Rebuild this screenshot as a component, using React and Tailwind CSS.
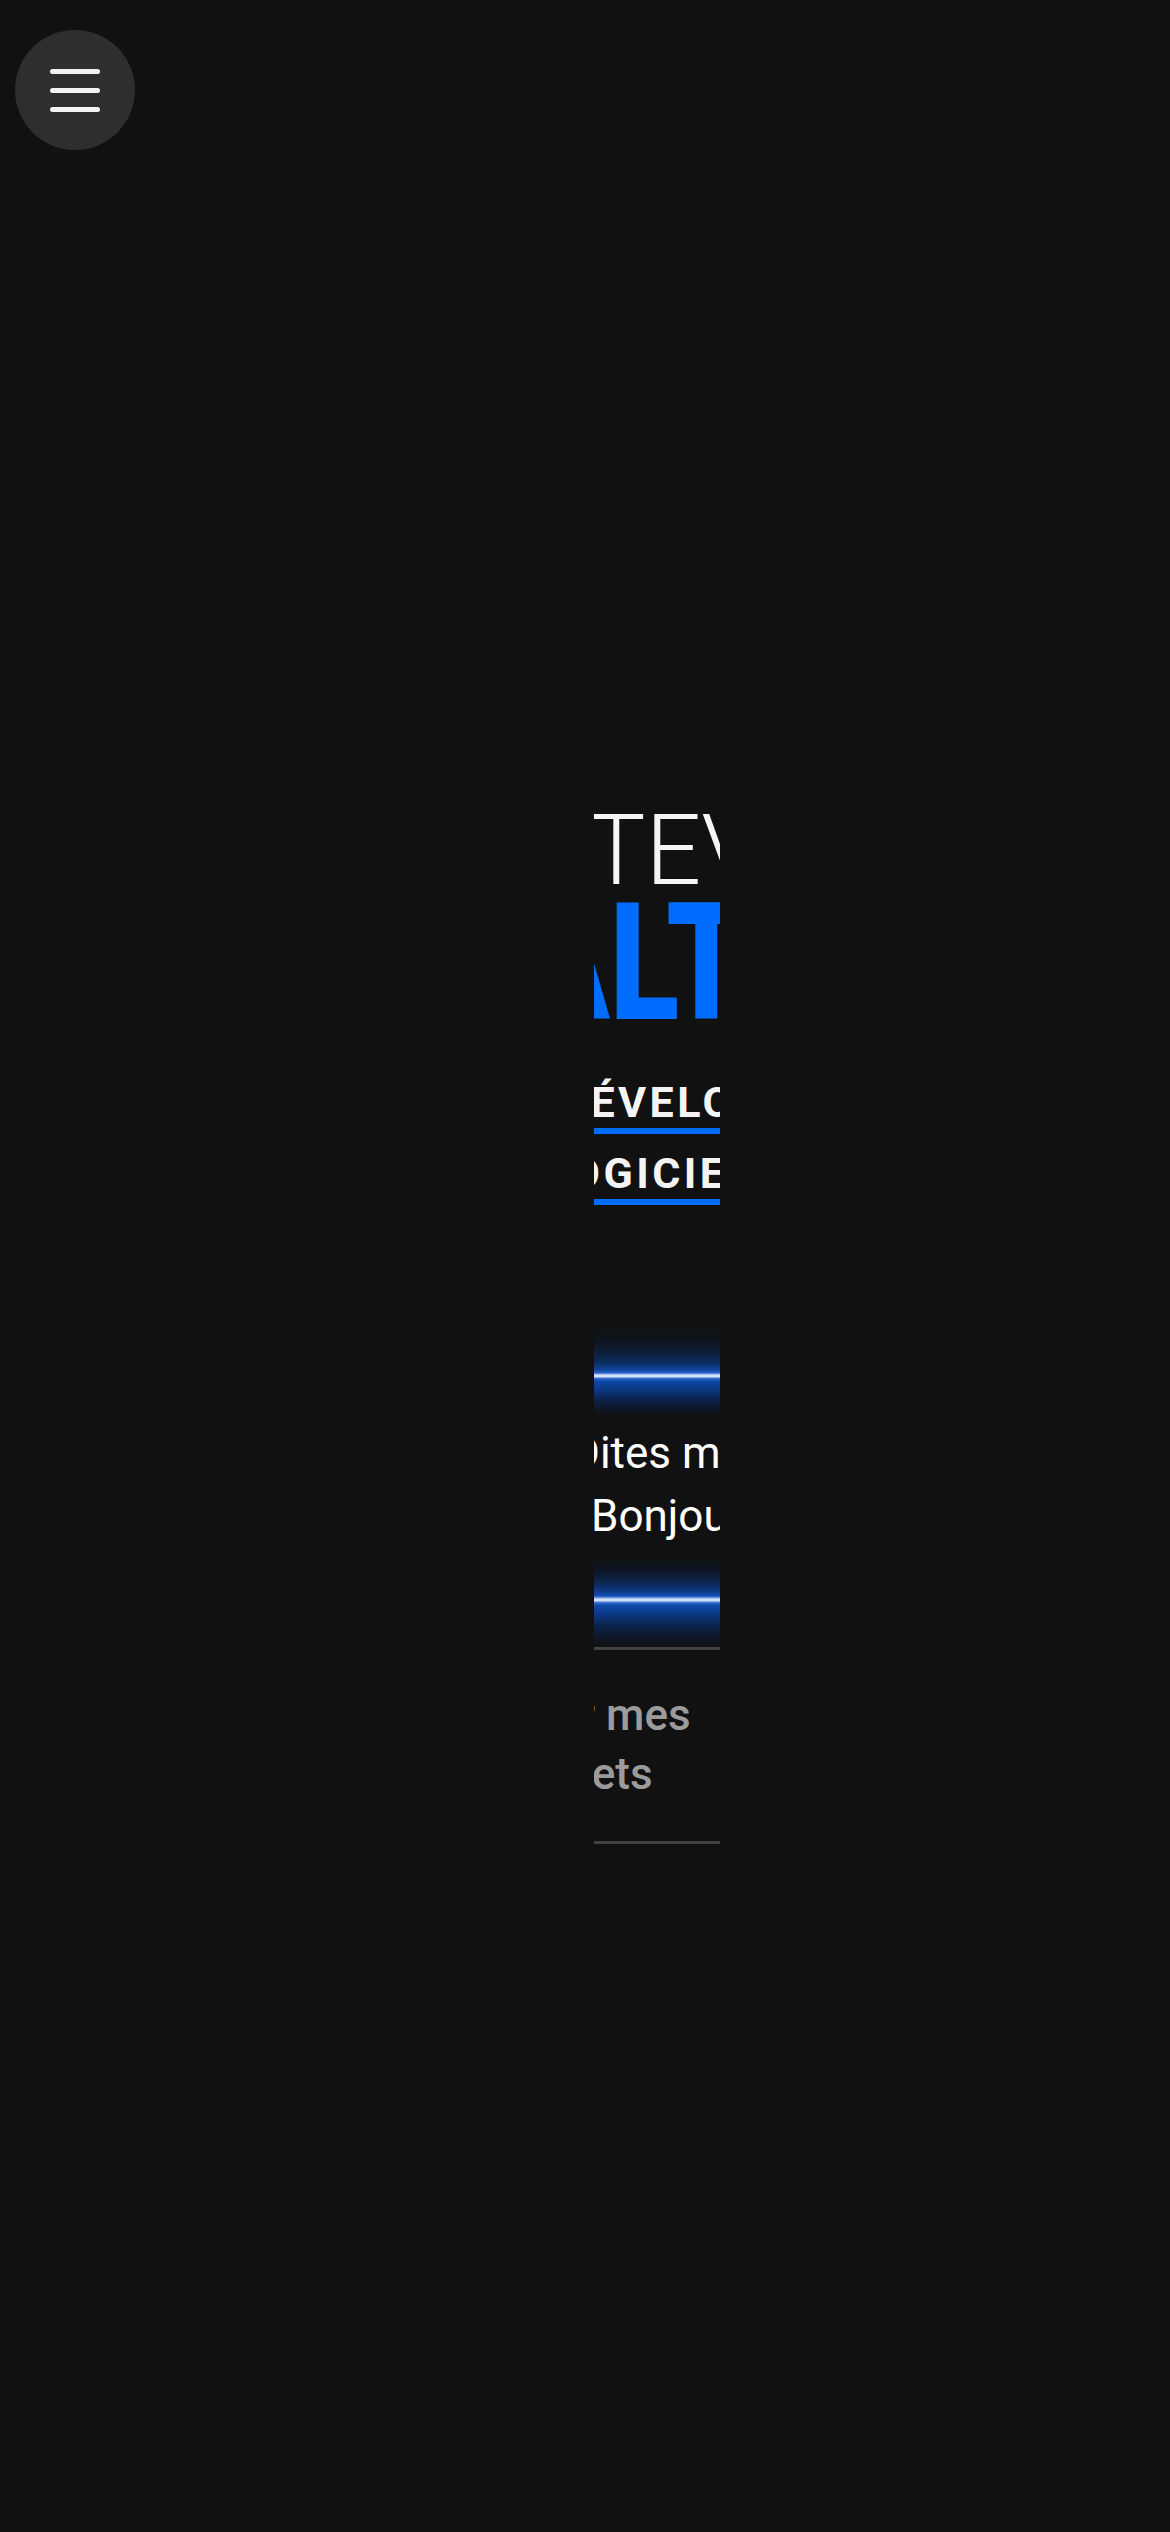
import React from "react";

const font = { fontFamily: "Roboto, 'Noto Sans', sans-serif" };

const MenuButton = () => (
  <button
    aria-label="Menu"
    className="fixed left-[15px] top-[30px] flex h-[120px] w-[120px] flex-col items-center justify-center gap-[14px] rounded-full bg-[#2e2e2e]"
  >
    <span className="block h-[5px] w-[50px] rounded-full bg-[#f2f2f2]" />
    <span className="block h-[5px] w-[50px] rounded-full bg-[#f2f2f2]" />
    <span className="block h-[5px] w-[50px] rounded-full bg-[#f2f2f2]" />
  </button>
);

export default function App() {
  return (
    <div className="min-h-[2532px] w-full bg-[#111111]" style={font}>
      <MenuButton />

      {/* narrow hero column */}
      <main className="ml-[594px] w-[126px] overflow-hidden pt-[811px]">
        <h1>
          <span className="-ml-[65px] block whitespace-nowrap text-[98px] font-light leading-[80px] text-[#f5f5f5]">
            STEVEN
          </span>
          <span className="-ml-[180px] block whitespace-nowrap text-[164px] font-black leading-[145px] text-[#006dff]">
            <span className="inline-block origin-left scale-x-[0.78]">WALTER</span>
          </span>
        </h1>

        <div className="mt-[40px] text-[43px] font-bold uppercase tracking-[0.08em] text-[#f4f4f4]">
          <div className="border-b-[6px] border-[#006dff] leading-[52px]">
            <span className="-ml-[35px] block whitespace-nowrap">Développeur</span>
          </div>
          <div className="mt-[13px] border-b-[6px] border-[#006dff] leading-[52px]">
            <span className="-ml-[49px] block whitespace-nowrap">Logiciel</span>
          </div>
        </div>

        {/* contact button with glow borders */}
        <a href="#contact" className="mt-[119px] block">
          <div className="h-[92px] bg-[linear-gradient(to_bottom,#111111_0px,#0f141b_15px,#0c1f3d_30px,#0b2f66_40px,#0d45a0_46px,#2a64c4_49px,#7ba5e8_50px,#d6e3f7_51px,#d6e3f7_53px,#3b72cf_54px,#0c4aa8_57px,#0a3a85_65px,#0b2450_75px,#0e1626_85px,#111111_92px)]" />
          <div className="mt-[6px] text-[44px] font-normal leading-[63px] text-white">
            <span className="-ml-[23px] block whitespace-nowrap">Dites moi</span>
            <span className="-ml-[3px] block whitespace-nowrap">Bonjour</span>
          </div>
          <div className="mt-[9px] h-[90px] bg-[linear-gradient(to_bottom,#111111_0px,#0e1522_12px,#0c2347_24px,#0b3a85_34px,#1250b5_39px,#7ba5e8_41px,#cfe0f7_42px,#cfe0f7_44px,#4a80d8_45px,#0d4aaa_48px,#0b3b88_56px,#0b2550_68px,#0f1728_80px,#111111_90px)]" />
        </a>

        <a
          href="#projets"
          className="block border-y-[3px] border-[#424242] pb-[37px] pt-[36px] text-[44px] font-medium leading-[59px] text-[#9b9b9b]"
        >
          <span className="-ml-[78px] block whitespace-nowrap">Voir mes</span>
          <span className="-ml-[78px] block whitespace-nowrap">projets</span>
        </a>
      </main>
    </div>
  );
}
